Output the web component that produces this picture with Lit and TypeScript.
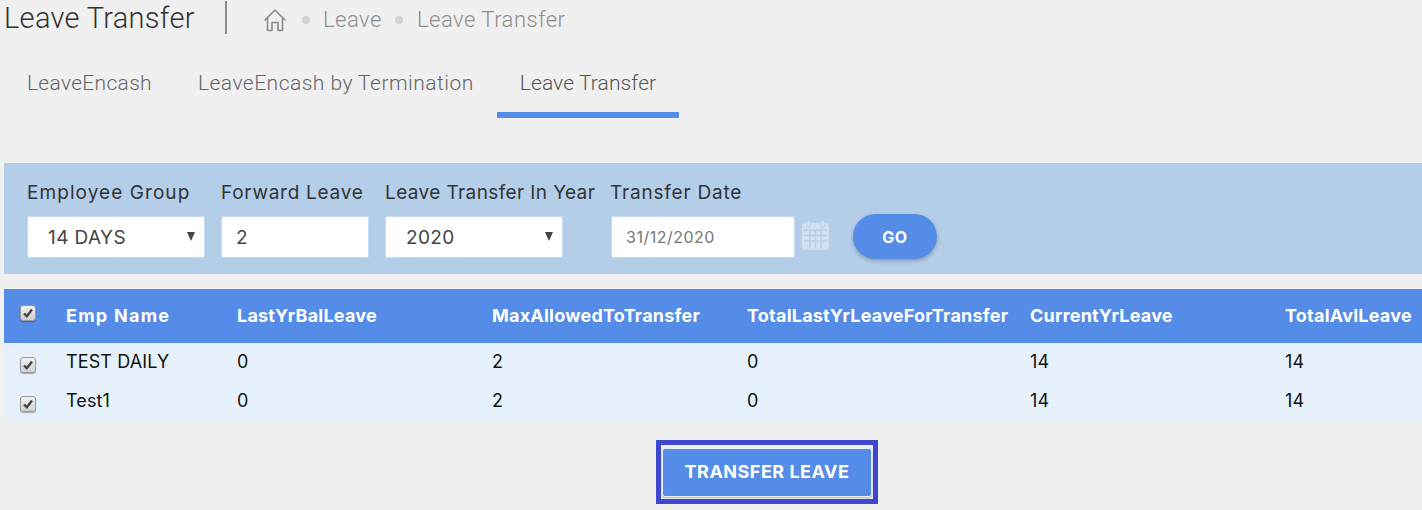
import { LitElement, html, css, svg } from "lit";
import { customElement } from "lit/decorators.js";

const rows = [
  ["TEST DAILY", "0", "2", "0", "14", "14"],
  ["Test1", "0", "2", "0", "14", "14"],
];
const heads = ["LastYrBalLeave", "MaxAllowedToTransfer", "TotalLastYrLeaveForTransfer", "CurrentYrLeave", "TotalAvlLeave"];

const check = html`<span class="check"><svg width="12" height="12" viewBox="0 0 12 12">${svg`<path d="M2 6.500 L4.800 9.200 L10 2.600" fill="none" stroke="#444" stroke-width="2.400"/>`}</svg></span>`;

@customElement("app-root")
export class AppRoot extends LitElement {
  static styles = css`
    :host { display: block; width: 1422px; height: 510px; background: #f0f0f0; overflow: hidden; font-family: "Inter", "Noto Sans", sans-serif; }
    .head { display: flex; align-items: center; height: 36px; padding-left: 4px; font-family: Roboto, sans-serif; font-weight: 300; }
    .title { font-size: 29px; color: #333; width: 221px; margin-top: -1px; letter-spacing: 0.3px; white-space: nowrap; }
    .rule { width: 2px; height: 33px; background: #8a8a8a; margin-top: -2px; margin-right: 36px; }
    .crumbs { display: flex; align-items: center; font-size: 22px; color: #8f8f8f; margin-top: 3px; letter-spacing: 0.5px; }
    .crumbs svg { display: block; }
    .dot { width: 8px; height: 8px; border-radius: 50%; background: #d2d2d2; }
    .dot.first { margin-left: 15px; margin-right: 13px; }
    .dot.second { margin-left: 13px; margin-right: 14px; }
    .tabs { display: flex; height: 82px; padding-left: 4px; font-family: Roboto, sans-serif; font-weight: 300; font-size: 21px; color: #666; margin-bottom: 45px; }
    .tab { padding: 36px 23px 0; height: 46px; line-height: 22px; white-space: nowrap; }
    .tab.s1 { letter-spacing: 0.3px; }
    .tab.s2 { letter-spacing: 0.48px; }
    .tab.on { border-bottom: 6px solid #548ce7; color: #555; height: 40px; letter-spacing: 0.1px; }
    .filter { margin-left: 4px; height: 111px; background: #b4ceea; display: flex; align-items: flex-start; box-sizing: border-box; padding: 17px 0 0 23px; }
    .field { display: flex; flex-direction: column; }
    .field label { font-size: 19px; line-height: 25px; color: #333; white-space: nowrap; margin-bottom: 11px; }
    .f1 label { letter-spacing: 1.07px; }
    .f2 label { letter-spacing: 0.74px; }
    .f3 label { letter-spacing: 0.39px; }
    .f4 label { letter-spacing: 0.8px; margin-left: -1px; }
    .box { height: 42px; box-sizing: border-box; background: #fff; border-radius: 2px; border: 1px solid #c9dcf1; font-size: 19px; color: #444; display: flex; align-items: center; padding-left: 20px; letter-spacing: 0.4px; position: relative; font-family: inherit; }
    input.box { outline: none; padding-left: 14px; }
    .w178 { width: 178px; }
    .w148 { width: 148px; }
    .w184 { width: 184px; }
    .f1 { width: 194px; }
    .f2 { width: 164px; }
    .f3 { width: 226px; }
    .arrow { position: absolute; right: 9px; top: 15px; width: 0; height: 0; border-left: 4px solid transparent; border-right: 4px solid transparent; border-top: 9px solid #444; }
    .date { color: #777; font-size: 16px; padding-left: 14px; letter-spacing: 0.5px; }
    .dateRow { display: flex; align-items: center; }
    .cal { margin: 0 0 4px 6px; display: block; }
    .go { margin: 34px 0 0 23px; border: 0; width: 84px; height: 45px; border-radius: 23px; background: #548ce7; color: #fff; font-family: inherit; font-weight: 700; font-size: 16px; letter-spacing: 0.5px; box-shadow: 0 2px 4px rgba(0,0,0,.25); }
    .table { margin: 15px 0 0 4px; display: grid; grid-template-columns: 62px 171px 255px 255px 283px 255px 1fr; }
    .hc { background: #548ce7; color: #fff; height: 54px; box-sizing: border-box; padding-bottom: 2px; display: flex; align-items: center; font-size: 18px; font-weight: 700; white-space: nowrap; letter-spacing: 0.22px; }
    .hc.name { letter-spacing: 1.25px; }
    .c { background: #e6f1fb; color: #111; height: 39px; display: flex; align-items: center; font-size: 18px; white-space: nowrap; letter-spacing: 0.12px; padding-bottom: 2px; box-sizing: border-box; }
    .cb { padding-left: 16px; box-sizing: border-box; }
    .cb.body { padding-top: 4px; padding-bottom: 0; }
    .cb.top { padding-bottom: 6px; }
    .check { width: 16px; height: 16px; box-sizing: border-box; border-radius: 3px; border: 1px solid #9a9a9a; background: linear-gradient(#f2f2f2, #cfcfcf); box-shadow: 0 1px 1px rgba(0,0,0,.3); display: flex; align-items: center; justify-content: center; }
    .foot { display: flex; justify-content: center; padding: 19px 0 0 112px; }
    .ring { border: 5px solid #3f48cc; padding: 3px 1px 2px; background: #f0f0f0; }
    .foot button { display: block; width: 210px; height: 49px; padding: 0 0 2px; background: #548ce7; color: #fff; border: 1px solid #e8eef8; border-radius: 3px; font-family: inherit; font-weight: 700; font-size: 18px; letter-spacing: 0.5px; box-shadow: 0 1px 2px rgba(0,0,0,.25); }
  `;

  render() {
    return html`
      <div class="head">
        <div class="title">Leave Transfer</div>
        <div class="rule"></div>
        <div class="crumbs">
          <svg width="24" height="24" viewBox="0 0 24 24" fill="none" stroke="#8a8a8a" stroke-width="1.6" stroke-linejoin="round">
            <path d="M1.500 12.500 L12 2 L22.500 12.500" />
            <path d="M4.500 10 V22.500 H9 V14.500 H15 V22.500 H19.500 V10" />
          </svg>
          <span class="dot first"></span>
          <span>Leave</span>
          <span class="dot second"></span>
          <span>Leave Transfer</span>
        </div>
      </div>
      <div class="tabs">
        <div class="tab s1">LeaveEncash</div>
        <div class="tab s2">LeaveEncash by Termination</div>
        <div class="tab on">Leave Transfer</div>
      </div>
      <div class="filter">
        <div class="field f1"><label>Employee Group</label><div class="box w178">14 DAYS<span class="arrow"></span></div></div>
        <div class="field f2"><label>Forward Leave</label><input class="box w148" value="2" /></div>
        <div class="field f3"><label>Leave Transfer In Year</label><div class="box w178">2020<span class="arrow"></span></div></div>
        <div class="field f4">
          <label>Transfer Date</label>
          <div class="dateRow">
            <div class="box w184 date">31/12/2020</div>
            <svg class="cal" width="29" height="30" viewBox="0 0 29 30">
              <rect x="1" y="3" width="27" height="27" rx="3" fill="#d3dfee"/>
              <rect x="5.500" y="0.500" width="4" height="7" rx="2" fill="#d3dfee" stroke="#b4ceea"/>
              <rect x="19.500" y="0.500" width="4" height="7" rx="2" fill="#d3dfee" stroke="#b4ceea"/>
              <path d="M3 10 H26 M3 15.500 H26 M3 21 H26 M9 10 V28 M14.500 10 V28 M20 10 V28" stroke="#b4ceea" stroke-width="1.400"/>
            </svg>
          </div>
        </div>
        <button class="go">GO</button>
      </div>
      <div class="table">
        <div class="hc cb top">${check}</div>
        <div class="hc name">Emp Name</div>
        ${heads.map((h) => html`<div class="hc">${h}</div>`)}
        ${rows.map((r) => html`
          <div class="c cb body">${check}</div>
          ${r.map((v) => html`<div class="c">${v}</div>`)}
        `)}
      </div>
      <div class="foot"><div class="ring"><button>TRANSFER LEAVE</button></div></div>
    `;
  }
}
